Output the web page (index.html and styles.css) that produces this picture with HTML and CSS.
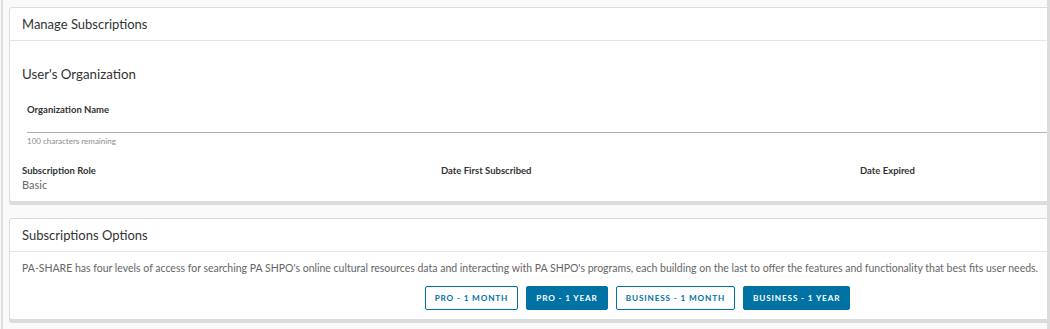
FILE: index.html
```html
<!DOCTYPE html>
<html>
<head>
<meta charset="utf-8">
<link rel="stylesheet" href="styles.css">
</head>
<body>
<div class="frame-left"></div>
<div class="frame-right"></div>
<main class="page">
  <section class="card">
    <div class="card-header">Manage Subscriptions</div>
    <div class="card-block">
      <h3 class="section-title">User's Organization</h3>
      <div class="field">
        <label class="field-label">Organization Name</label>
        <div class="field-input"></div>
        <div class="field-helper">100 characters remaining</div>
      </div>
      <div class="info-row">
        <div class="info-col">
          <div class="info-label">Subscription Role</div>
          <div class="info-value">Basic</div>
        </div>
        <div class="info-col">
          <div class="info-label">Date First Subscribed</div>
        </div>
        <div class="info-col">
          <div class="info-label">Date Expired</div>
        </div>
      </div>
    </div>
  </section>
  <section class="card">
    <div class="card-header">Subscriptions Options</div>
    <div class="card-block options">
      <p class="options-text">PA-SHARE has four levels of access for searching PA SHPO's online cultural resources data and interacting with PA SHPO's programs, each building on the last to offer the features and functionality that best fits user needs.</p>
      <div class="btn-row">
        <button class="btn btn-outline">Pro - 1 Month</button>
        <button class="btn btn-primary">Pro - 1 Year</button>
        <button class="btn btn-outline">Business - 1 Month</button>
        <button class="btn btn-primary">Business - 1 Year</button>
      </div>
    </div>
  </section>
</main>
</body>
</html>
```

FILE: styles.css
```css
html, body {
  margin: 0;
  padding: 0;
  width: 1050px;
  height: 329px;
  overflow: hidden;
  background: #fafafa;
  font-family: Lato, "Noto Sans", sans-serif;
  color: #565656;
}
.frame-left {
  position: fixed;
  left: 1px;
  top: 0;
  bottom: 0;
  width: 2px;
  background: #dedede;
}
.frame-right {
  position: fixed;
  left: 1047px;
  top: 0;
  bottom: 0;
  width: 3px;
  background: #dcdcdc;
  z-index: 5;
}
.page {
  padding: 7px 0 0 9px;
  width: 1257px;
  display: flex;
  flex-direction: column;
  gap: 16px;
}
.card {
  background: #fff;
  border: 1px solid #dcdcdc;
  border-radius: 3px;
  box-shadow: 0 3px 0 0 #dcdcdc;
}
.card-header {
  height: 33px;
  box-sizing: border-box;
  padding: 8px 12px 0;
  border-bottom: 1px solid #e6e6e6;
  font-size: 13px;
  line-height: 17px;
  color: #333;
}
.card-block {
  padding: 0 12px;
}
.section-title {
  margin: 0;
  padding-top: 24px;
  font-size: 13.3px;
  font-weight: 400;
  color: #333;
  line-height: 18px;
}
.field {
  padding-left: 5px;
  margin-top: 21px;
}
.field-label {
  display: block;
  font-size: 9.5px;
  font-weight: 700;
  color: #333;
  line-height: 12px;
}
.field-input {
  height: 16px;
  border-bottom: 1px solid #b3b3b3;
}
.field-helper {
  margin-top: 3px;
  font-size: 8px;
  color: #8c8c8c;
  line-height: 10px;
}
.info-row {
  display: flex;
  margin-top: 19px;
  padding-bottom: 9px;
}
.info-col {
  flex: none;
  width: 419px;
}
.info-label {
  font-size: 9.5px;
  font-weight: 700;
  color: #333;
  line-height: 12px;
}
.info-value {
  margin-top: 1px;
  font-size: 11px;
  color: #666;
  line-height: 14px;
}
.options {
  padding-top: 10px;
  padding-bottom: 9px;
}
.options-text {
  margin: 0;
  font-size: 10.5px;
  line-height: 13px;
  color: #666;
  white-space: nowrap;
}
.btn-row {
  display: flex;
  justify-content: center;
  gap: 8px;
  margin-top: 11px;
}
.btn {
  height: 24px;
  box-sizing: border-box;
  padding: 0 9px;
  border-radius: 2px;
  font-family: Lato, "Noto Sans", sans-serif;
  font-size: 8.2px;
  font-weight: 700;
  letter-spacing: 0.85px;
  text-transform: uppercase;
  cursor: pointer;
}
.btn-outline {
  background: #fff;
  border: 1px solid #0072a3;
  color: #0072a3;
}
.btn-primary {
  background: #0072a3;
  border: 1px solid #0072a3;
  color: #fff;
}
```
